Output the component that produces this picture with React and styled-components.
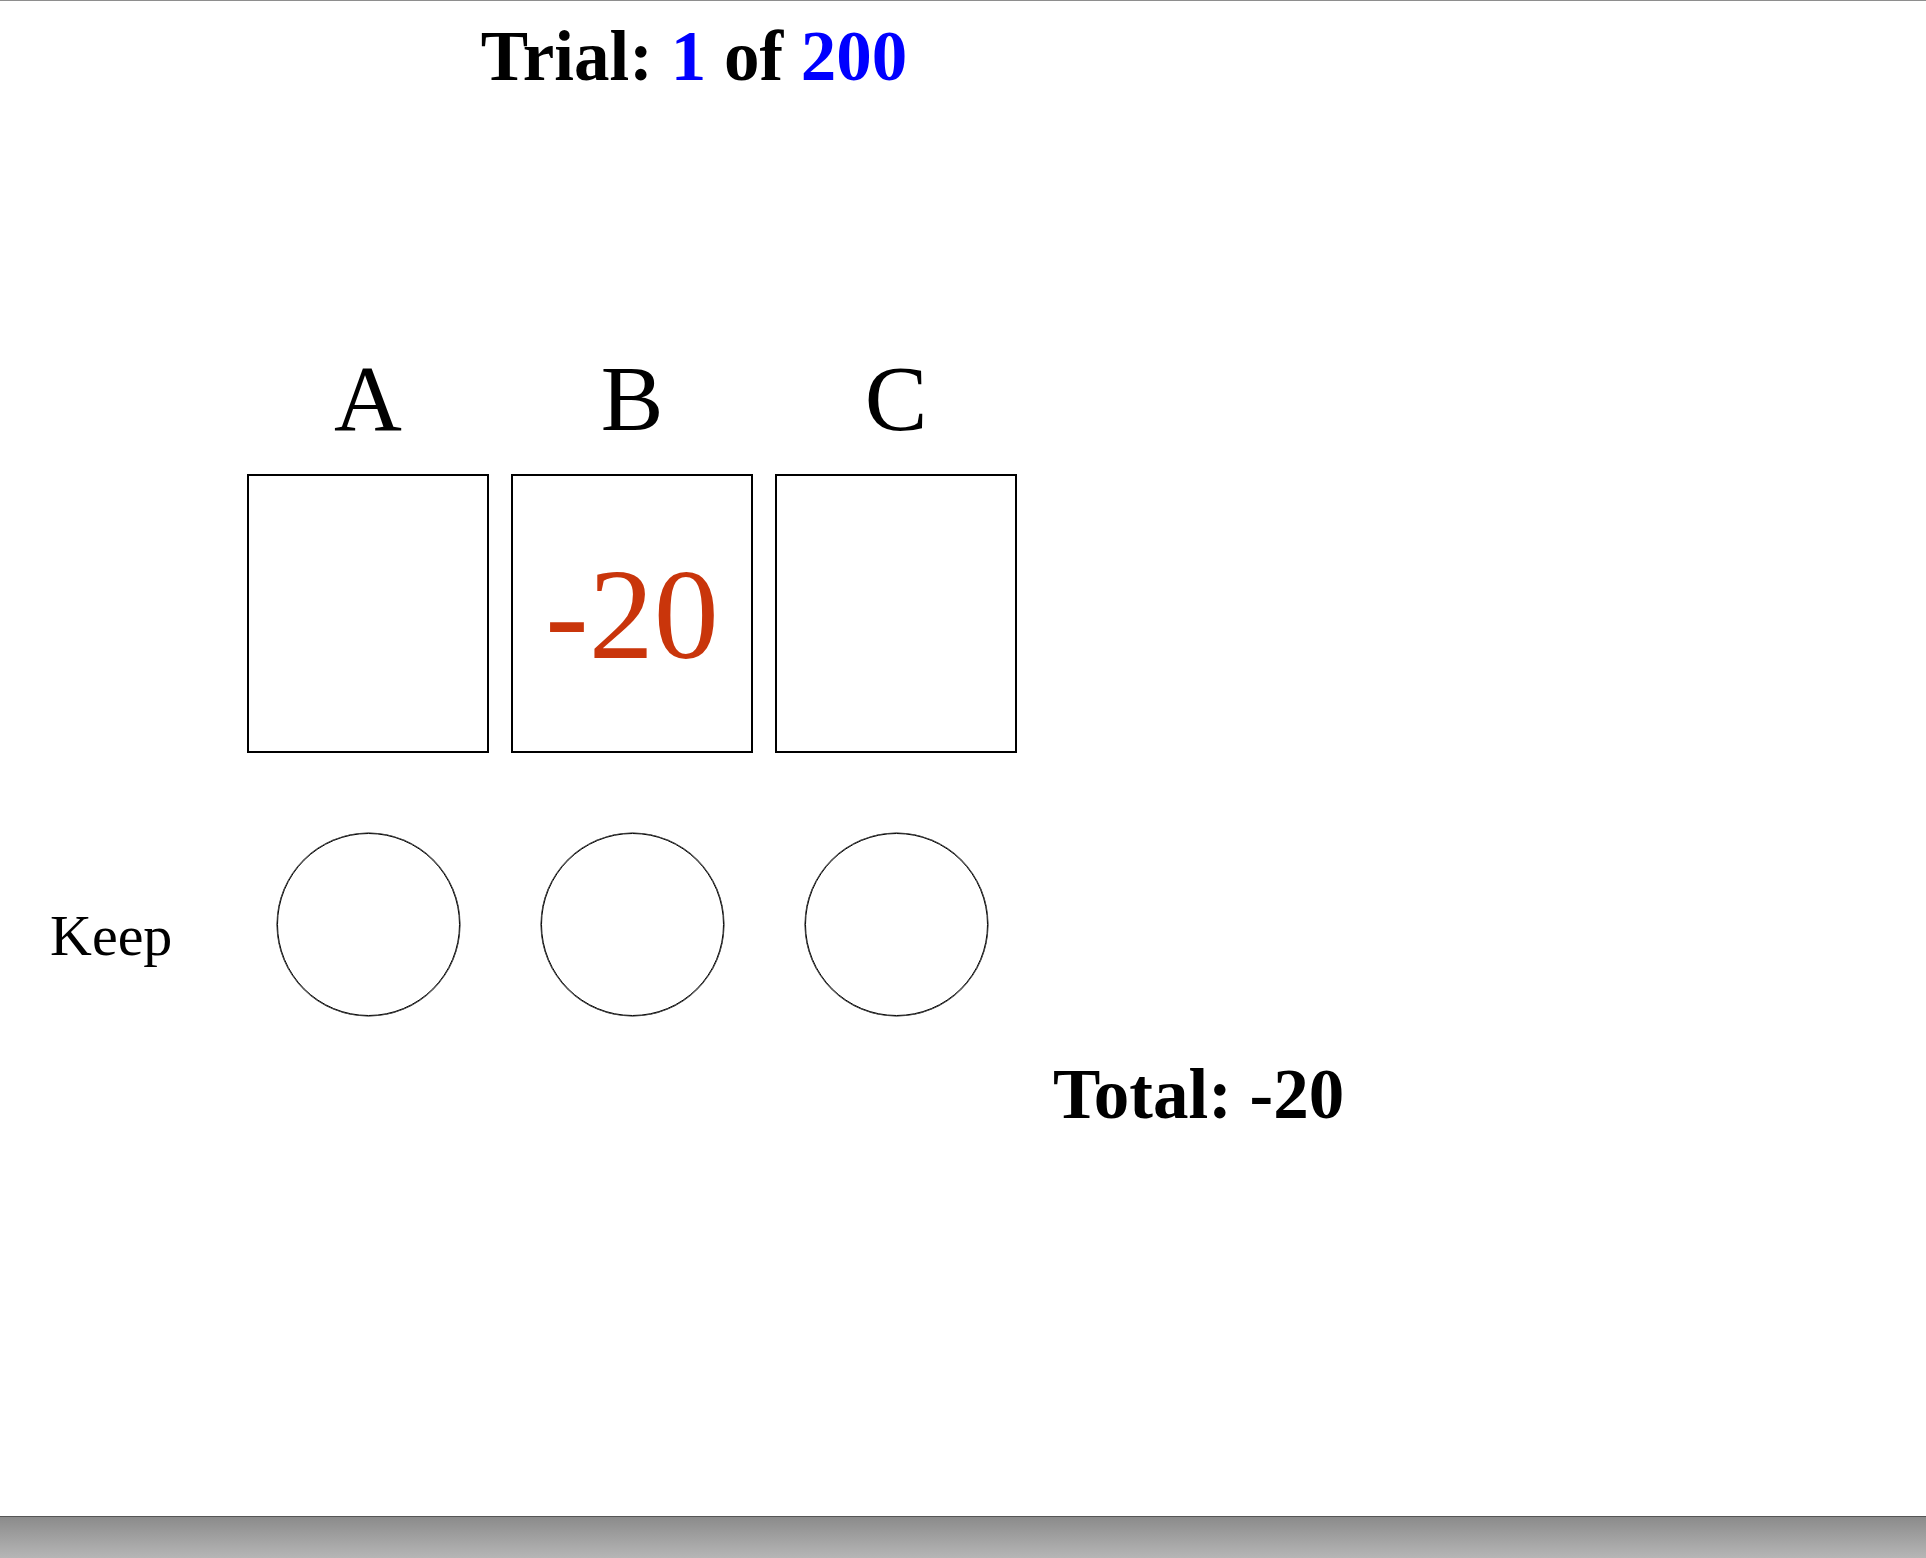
import React from "react";
import styled, { createGlobalStyle } from "styled-components";

const GlobalStyle = createGlobalStyle`
  html, body {
    margin: 0;
    padding: 0;
    background: #fff;
  }
  body {
    font-family: "Liberation Serif", "Times New Roman", serif;
    color: #000;
  }
`;

const Page = styled.div`
  min-height: 100vh;
  box-sizing: border-box;
  display: flex;
  flex-direction: column;
  border-top: 1px solid #8e8e8e;
`;

const Header = styled.h1`
  margin: 0;
  padding-top: 20px;
  width: 1388px;
  text-align: center;
  font-size: 71px;
  line-height: 70px;
  font-weight: bold;
`;

const Num = styled.span`
  color: #0000ff;
`;

const Board = styled.div`
  margin-top: 260px;
  display: grid;
  grid-template-columns: 236px repeat(3, 264px);
`;

const Letter = styled.div`
  text-align: center;
  font-size: 94px;
  line-height: 94px;
  height: 94px;
  margin-bottom: 29px;
`;

const Card = styled.div`
  box-sizing: border-box;
  margin: 0 11px;
  height: 279px;
  border: 2px solid #000;
  display: flex;
  align-items: center;
  justify-content: center;
  font-size: 130px;
  line-height: 1;
  color: #c9350b;
`;

const RowLabel = styled.div`
  padding: 154px 0 0 50px;
  font-size: 58px;
  line-height: 58px;
`;

const Slot = styled.div`
  margin-top: 80px;
  display: flex;
  justify-content: center;
`;

const Circle = styled.div`
  box-sizing: border-box;
  width: 183px;
  height: 183px;
  border-radius: 50%;
  border: 1px solid #000;
  box-shadow: 0 0 0 0.5px #000;
`;

const Total = styled.div`
  margin-top: 43px;
  padding-left: 1053px;
  font-size: 71px;
  line-height: 70px;
  font-weight: bold;
`;

const StatusBar = styled.div`
  margin-top: auto;
  height: 42px;
  box-sizing: border-box;
  border-top: 1px solid #555;
  background: linear-gradient(to bottom, #8b8b8b, #b6b6b6);
`;

const decks = [
  { name: "A", value: null },
  { name: "B", value: -20 },
  { name: "C", value: null },
];

const App = () => {
  return (
    <>
      <GlobalStyle />
      <Page>
        <Header>
          Trial: <Num>1</Num> of <Num>200</Num>
        </Header>
        <Board>
          <div />
          {decks.map((d) => (
            <Letter key={d.name}>{d.name}</Letter>
          ))}
          <div />
          {decks.map((d) => (
            <Card key={d.name}>{d.value !== null ? d.value : ""}</Card>
          ))}
          <RowLabel>Keep</RowLabel>
          {decks.map((d) => (
            <Slot key={d.name}>
              <Circle />
            </Slot>
          ))}
        </Board>
        <Total>Total: -20</Total>
        <StatusBar />
      </Page>
    </>
  );
};

export default App;
